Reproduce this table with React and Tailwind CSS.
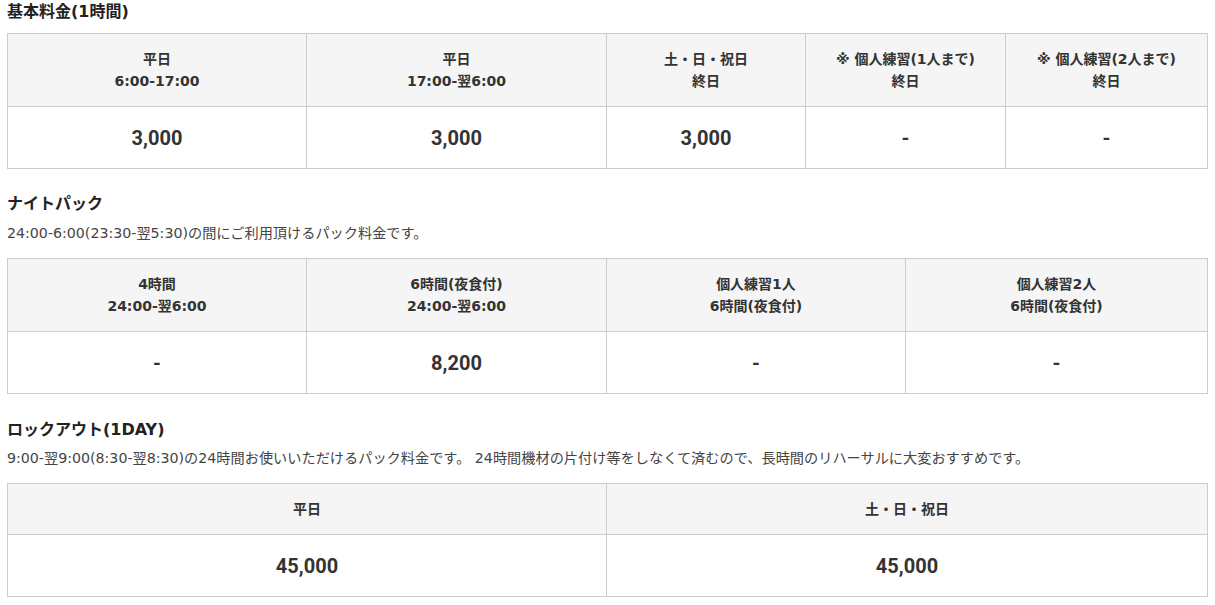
import React from "react";

const JP = "font-['DejaVu_Sans','Noto_Sans_CJK_JP',sans-serif]";
const NUM = "font-['Roboto','Liberation_Sans','Noto_Sans_CJK_JP',sans-serif]";

function PriceTable({ widths, heads, values, headH }) {
  return (
    <table className="table-fixed border-collapse w-[1200px]">
      <colgroup>
        {widths.map((w, i) => (
          <col key={i} className={w} />
        ))}
      </colgroup>
      <tbody>
        <tr className="bg-[#f5f5f5]">
          {heads.map((h, i) => (
            <th
              key={i}
              className={`border border-[#cccccc] text-center font-bold text-[14px] leading-[22px] text-[#333] ${JP} ${headH}`}
            >
              {h.map((line, j) => (
                <div key={j}>{line}</div>
              ))}
            </th>
          ))}
        </tr>
        <tr>
          {values.map((v, i) => (
            <td
              key={i}
              className={`border border-[#cccccc] text-center font-bold text-[20px] text-[#333] h-[62px] align-middle ${NUM}`}
            >
              {v}
            </td>
          ))}
        </tr>
      </tbody>
    </table>
  );
}

function Heading({ children, className }) {
  return (
    <h3 className={`text-[16px] font-bold leading-[22px] text-[#222] ${JP} ${className}`}>
      {children}
    </h3>
  );
}

function Desc({ children, className }) {
  return (
    <p className={`text-[14.2px] leading-[22px] text-[#444] ${JP} ${className}`}>
      {children}
    </p>
  );
}

export default function App() {
  return (
    <div className={`bg-white w-[1215px] h-[605px] pl-[7px] text-[#333] flex flex-col ${JP}`}>
      <Heading className="pt-px">基本料金(1時間)</Heading>
      <div className="mt-[10px]">
        <PriceTable
          widths={["w-[299px]", "w-[300px]", "w-[199px]", "w-[200px]", "w-[202px]"]}
          headH="h-[73px]"
          heads={[
            ["平日", "6:00-17:00"],
            ["平日", "17:00-翌6:00"],
            ["土・日・祝日", "終日"],
            ["※ 個人練習(1人まで)", "終日"],
            ["※ 個人練習(2人まで)", "終日"],
          ]}
          values={["3,000", "3,000", "3,000", "-", "-"]}
        />
      </div>

      <Heading className="mt-[24px]">ナイトパック</Heading>
      <Desc className="mt-[7px]">24:00-6:00(23:30-翌5:30)の間にご利用頂けるパック料金です。</Desc>
      <div className="mt-[14px]">
        <PriceTable
          widths={["w-[299px]", "w-[300px]", "w-[299px]", "w-[302px]"]}
          headH="h-[73px]"
          heads={[
            ["4時間", "24:00-翌6:00"],
            ["6時間(夜食付)", "24:00-翌6:00"],
            ["個人練習1人", "6時間(夜食付)"],
            ["個人練習2人", "6時間(夜食付)"],
          ]}
          values={["-", "8,200", "-", "-"]}
        />
      </div>

      <Heading className="mt-[25px]">ロックアウト(1DAY)</Heading>
      <Desc className="mt-[6px]">
        9:00-翌9:00(8:30-翌8:30)の24時間お使いいただけるパック料金です。 24時間機材の片付け等をしなくて済むので、長時間のリハーサルに大変おすすめです。
      </Desc>
      <div className="mt-[14px]">
        <PriceTable
          widths={["w-[599px]", "w-[601px]"]}
          headH="h-[51px]"
          heads={[["平日"], ["土・日・祝日"]]}
          values={["45,000", "45,000"]}
        />
      </div>
    </div>
  );
}
